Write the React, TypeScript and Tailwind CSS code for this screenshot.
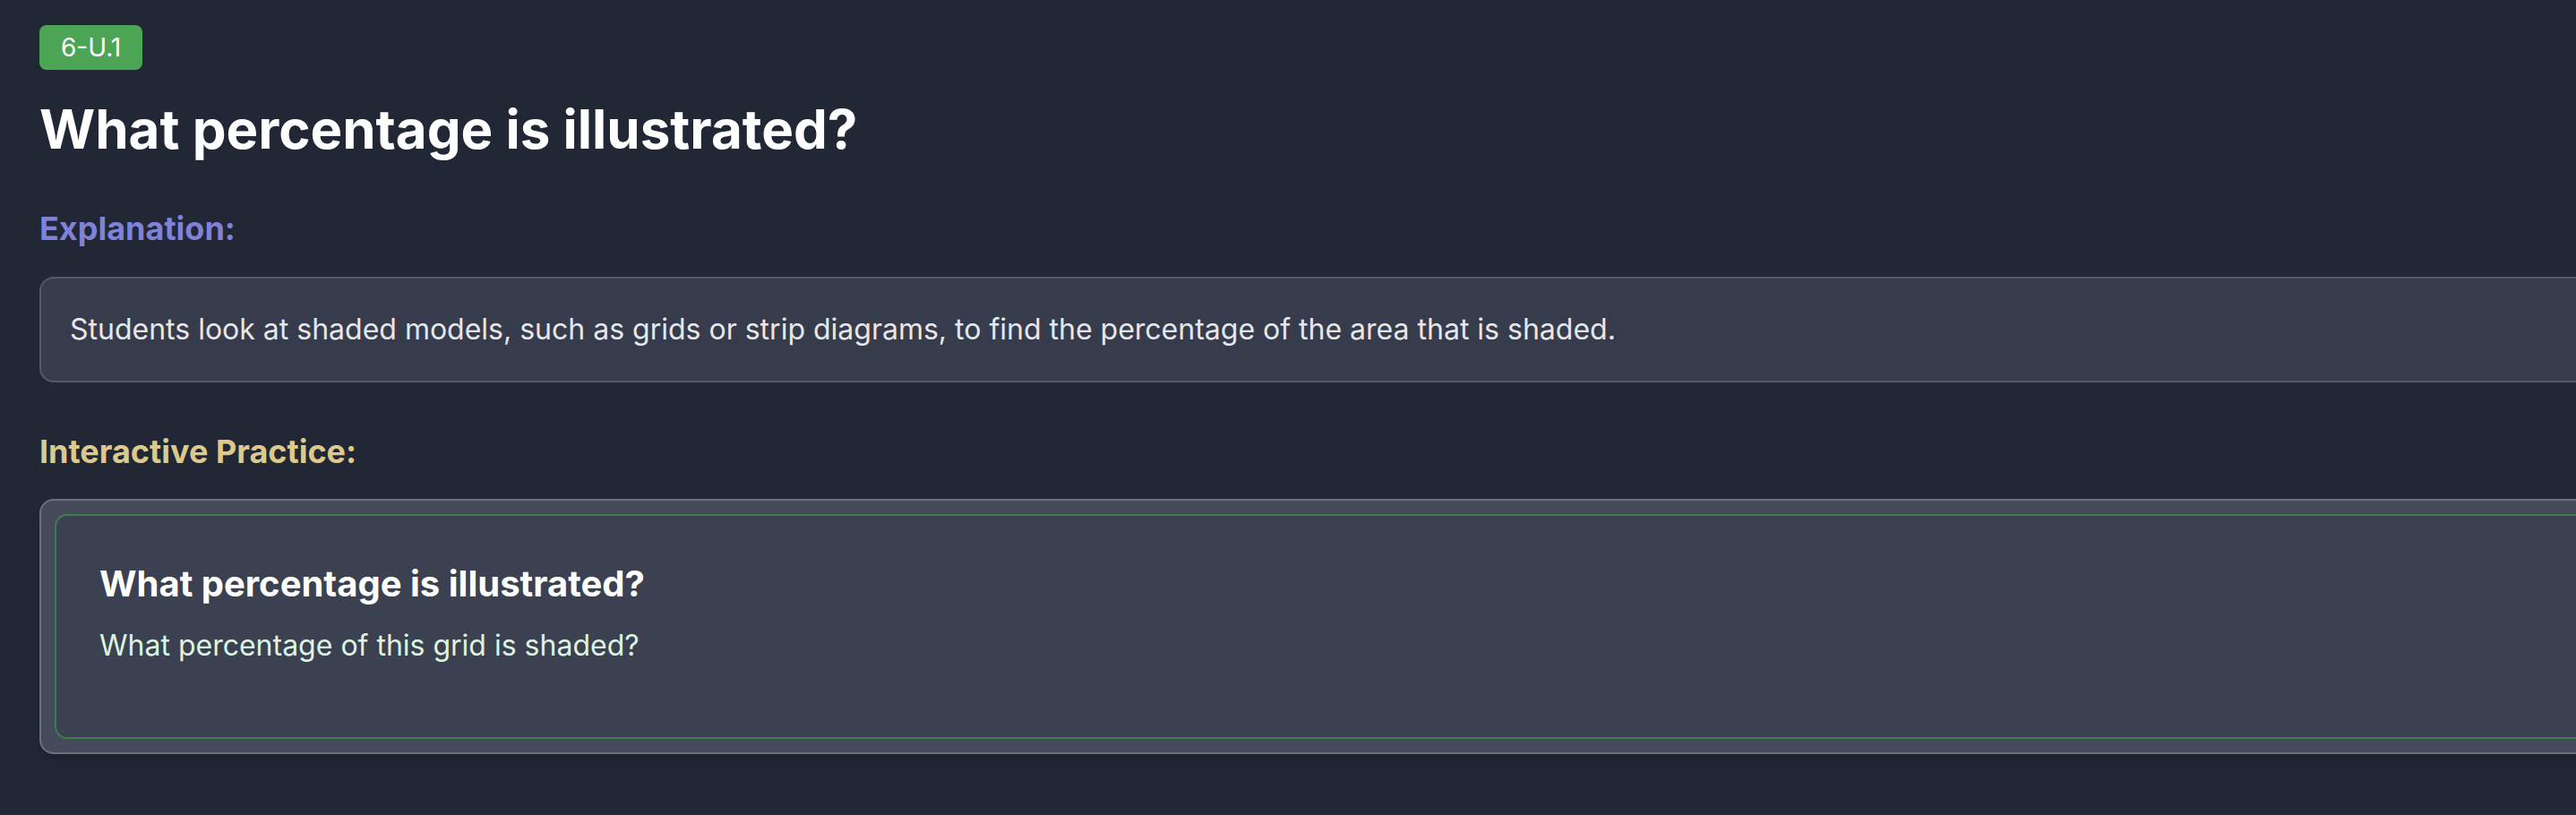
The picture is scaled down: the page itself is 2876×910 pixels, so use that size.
import React from "react";

const App: React.FC = () => {
  return (
    <div className="min-h-screen w-full overflow-x-hidden bg-[#212735] font-['Inter',sans-serif] text-white">
      <main className="w-[2980px] pl-[44px] pt-[28px] pb-[60px]">
        {/* Skill code */}
        <span className="inline-block rounded-[8px] bg-[#4ca455] px-[24px] py-[8px] text-[28px] leading-[34px] text-white">
          6-U.1
        </span>

        <h1 className="mt-[30px] text-[60px] font-bold leading-[72px] text-white">
          What percentage is illustrated?
        </h1>

        {/* Explanation */}
        <h2 className="mt-[48px] text-[36px] font-bold leading-[54px] text-[#7f82d5]">
          Explanation:
        </h2>
        <div className="mt-[27px] rounded-[16px] border-2 border-[#535a6a] bg-[#363c4c] px-[32px] py-[33px]">
          <p className="text-[32px] leading-[48px] text-[#e5e7eb]">
            Students look at shaded models, such as grids or strip diagrams, to
            find the percentage of the area that is shaded.
          </p>
        </div>

        {/* Practice */}
        <h2 className="mt-[50px] text-[36px] font-bold leading-[54px] text-[#dcc98b]">
          Interactive Practice:
        </h2>
        <div className="mt-[26px] rounded-[16px] border-2 border-[#6b7080] bg-[#454b5a] p-[15px] shadow-lg">
          <div className="rounded-[14px] border-2 border-[#3e7c4b] bg-[#3b4151] p-[48px]">
            <h3 className="text-[40px] font-bold leading-[56px] text-white">
              What percentage is illustrated?
            </h3>
            <p className="mt-[17px] text-[32px] leading-[48px] text-[#dcf4e2]">
              What percentage of this grid is shaded?
            </p>
            <div className="mt-[30px]"></div>
          </div>
        </div>
      </main>
    </div>
  );
};

export default App;
